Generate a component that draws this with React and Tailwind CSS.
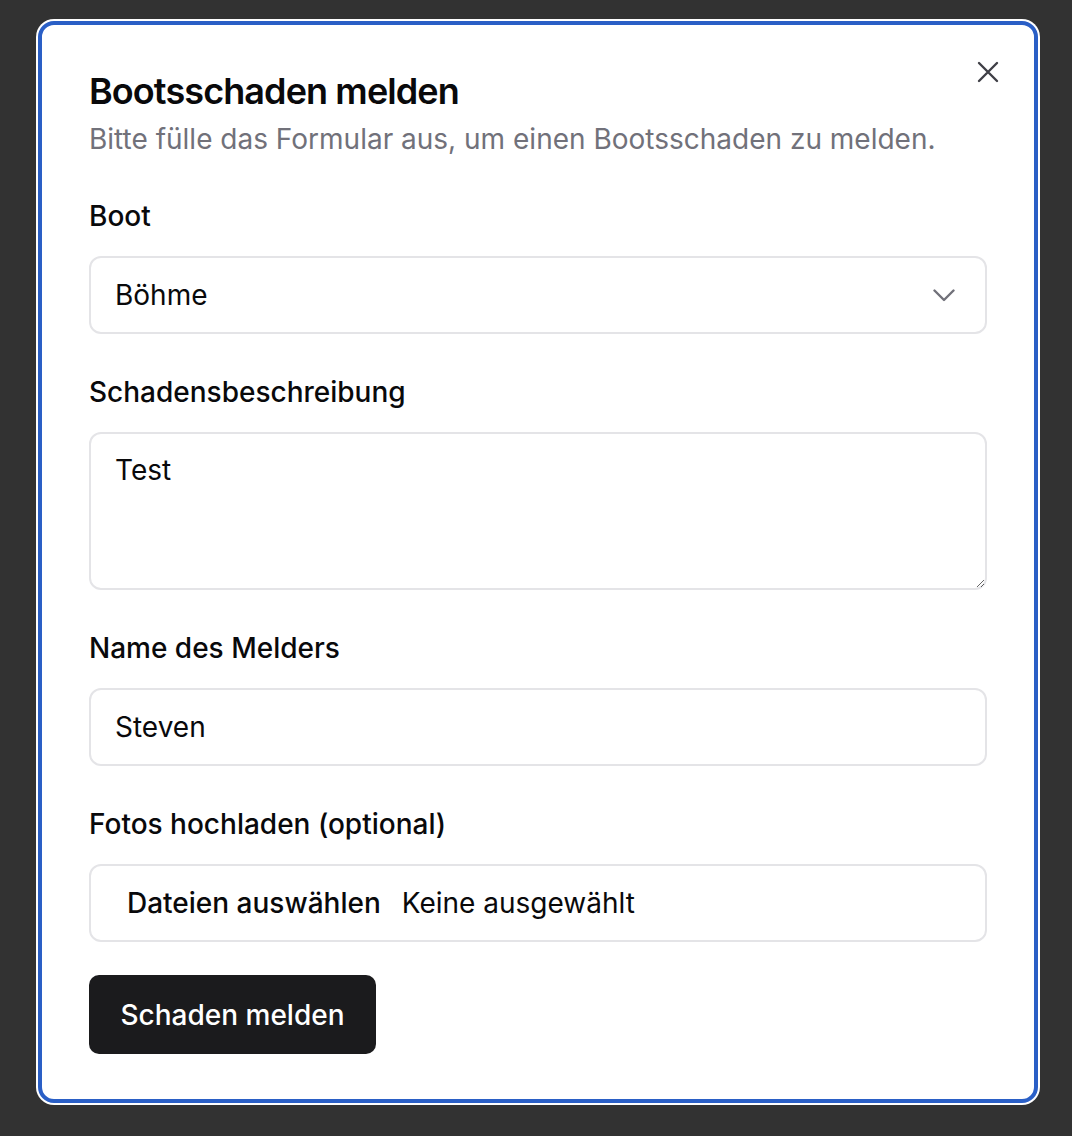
import { useState } from 'react'

function CloseIcon() {
  return (
    <svg width="22" height="22" viewBox="0 0 22 22" fill="none" stroke="#3f3f46" strokeWidth="2.4" strokeLinecap="round">
      <path d="M2 2 L20 20 M20 2 L2 20" />
    </svg>
  )
}

function Chevron() {
  return (
    <svg width="22" height="13" viewBox="0 0 22 13" fill="none" stroke="#71717a" strokeWidth="2.4" strokeLinecap="round" strokeLinejoin="round">
      <path d="M1.5 1.5 L11 11 L20.5 1.5" />
    </svg>
  )
}

function Field({ label, children }) {
  return (
    <div className="flex flex-col gap-6">
      <label className="text-[28px] leading-[32px] font-medium text-[#09090b]">{label}</label>
      {children}
    </div>
  )
}

export default function App() {
  const [name, setName] = useState('Steven')
  const [text, setText] = useState('Test')

  return (
    <div className="min-h-[1136px] bg-[#323232] pt-[21px] pl-[38px] font-['Inter',sans-serif]">
      <div className="relative w-[1000px] h-[1082px] bg-white rounded-[16px] border-4 border-[#2a5fc6] shadow-[0_0_0_2px_#ffffff] px-[47px] pt-[46px]">
        <button className="absolute right-[31px] top-[32px] p-1">
          <CloseIcon />
        </button>

        <h2 className="text-[36px] leading-[40px] font-semibold tracking-tight text-[#09090b]">Bootsschaden melden</h2>
        <p className="mt-3 text-[28px] leading-[32px] text-[#71717a]">Bitte fülle das Formular aus, um einen Bootsschaden zu melden.</p>

        <form className="mt-[45px] flex flex-col gap-[42px]" onSubmit={e => e.preventDefault()}>
          <Field label="Boot">
            <div className="h-[78px] rounded-[12px] border-2 border-[#e4e4e7] pl-6 pr-[30px] flex items-center justify-between">
              <span className="text-[28px] text-[#09090b]">Böhme</span>
              <Chevron />
            </div>
          </Field>

          <Field label="Schadensbeschreibung">
            <textarea
              value={text}
              onChange={e => setText(e.target.value)}
              className="h-[158px] rounded-[12px] border-2 border-[#e4e4e7] px-6 py-[20px] text-[28px] leading-[32px] text-[#09090b] outline-none resize-y"
            />
          </Field>

          <Field label="Name des Melders">
            <input
              value={name}
              onChange={e => setName(e.target.value)}
              className="h-[78px] rounded-[12px] border-2 border-[#e4e4e7] px-6 text-[28px] text-[#09090b] outline-none"
            />
          </Field>

          <Field label="Fotos hochladen (optional)">
            <div className="h-[78px] rounded-[12px] border-2 border-[#e4e4e7] pl-[36px] flex items-center gap-[21px] text-[28px] text-[#09090b]">
              <span className="font-medium">Dateien auswählen</span>
              <span>Keine ausgewählt</span>
            </div>
          </Field>
        </form>

        <button className="mt-[33px] h-[79px] w-[287px] rounded-[10px] bg-[#1b1b1d] text-white text-[28px] font-medium">
          Schaden melden
        </button>
      </div>
    </div>
  )
}
